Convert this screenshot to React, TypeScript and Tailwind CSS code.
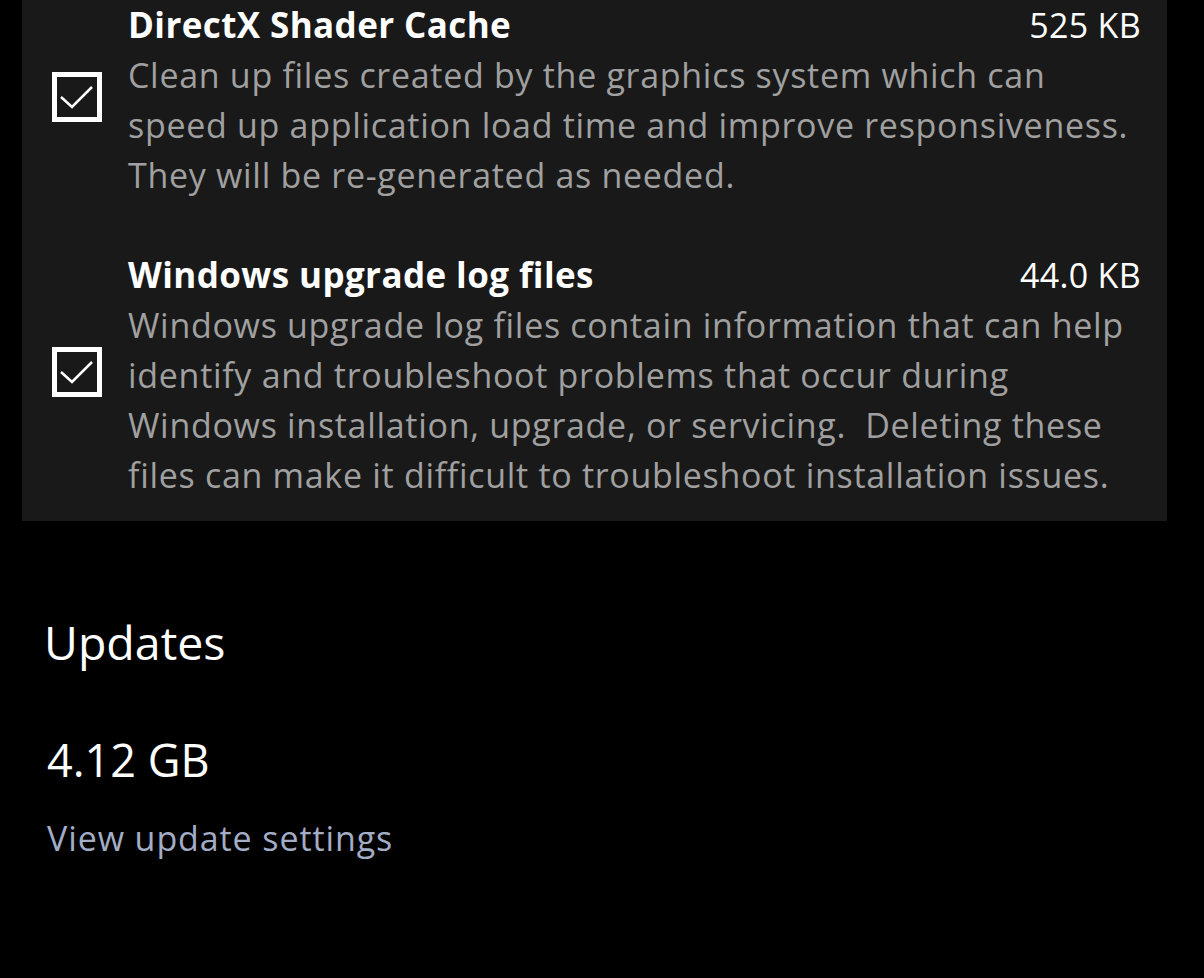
import React from "react"

const font = { fontFamily: '"Open Sans", "Noto Sans", sans-serif' }

function Check() {
  return (
    <div className="w-[50px] h-[50px] border-[5px] border-white shrink-0 mb-[6px]">
      <svg width="40" height="40" viewBox="0 0 40 40" fill="none">
        <path d="M4 20 L15 30 L35 10" stroke="white" strokeWidth="2.5" />
      </svg>
    </div>
  )
}

type Item = { title: string; size: string; lines: string[] }

const items: Item[] = [
  {
    title: "DirectX Shader Cache",
    size: "525 KB",
    lines: [
      "Clean up files created by the graphics system which can",
      "speed up application load time and improve responsiveness.",
      "They will be re-generated as needed.",
    ],
  },
  {
    title: "Windows upgrade log files",
    size: "44.0 KB",
    lines: [
      "Windows upgrade log files contain information that can help",
      "identify and troubleshoot problems that occur during",
      "Windows installation, upgrade, or servicing.\u00a0 Deleting these",
      "files can make it difficult to troubleshoot installation issues.",
    ],
  },
]

function CleanupItem({ item }: { item: Item }) {
  return (
    <div className="flex items-center pl-[30px] pr-[26px]">
      <Check />
      <div className="flex-1 ml-[26px]">
        <div className="flex justify-between items-baseline leading-[50px] text-white whitespace-nowrap">
          <span className="text-[35px] font-bold tracking-[0.4px]">{item.title}</span>
          <span className="text-[34px] tracking-[0.3px]">{item.size}</span>
        </div>
        {item.lines.map((l) => (
          <div key={l} className="leading-[50px] text-[34px] tracking-[0.7px] text-[#a0a0a0] whitespace-nowrap">
            {l}
          </div>
        ))}
      </div>
    </div>
  )
}

export default function App() {
  return (
    <div className="w-full h-[978px] bg-black overflow-hidden" style={font}>
      <div className="ml-[22px] w-[1145px] bg-[#191919] pb-[21px] flex flex-col gap-[50px]">
        {items.map((it) => (
          <CleanupItem key={it.title} item={it} />
        ))}
      </div>

      <div className="pl-[44px]">
        <h2 className="mt-[91px] leading-[60px] text-[46.5px] text-white">Updates</h2>
        <div className="mt-[58px] leading-[60px] text-[45px] text-white pl-[3px]">4.12 GB</div>
        <a className="block mt-[23px] leading-[50px] text-[34px] tracking-[0.9px] text-[#a3adc6] pl-[3px] w-fit">
          View update settings
        </a>
      </div>
    </div>
  )
}
